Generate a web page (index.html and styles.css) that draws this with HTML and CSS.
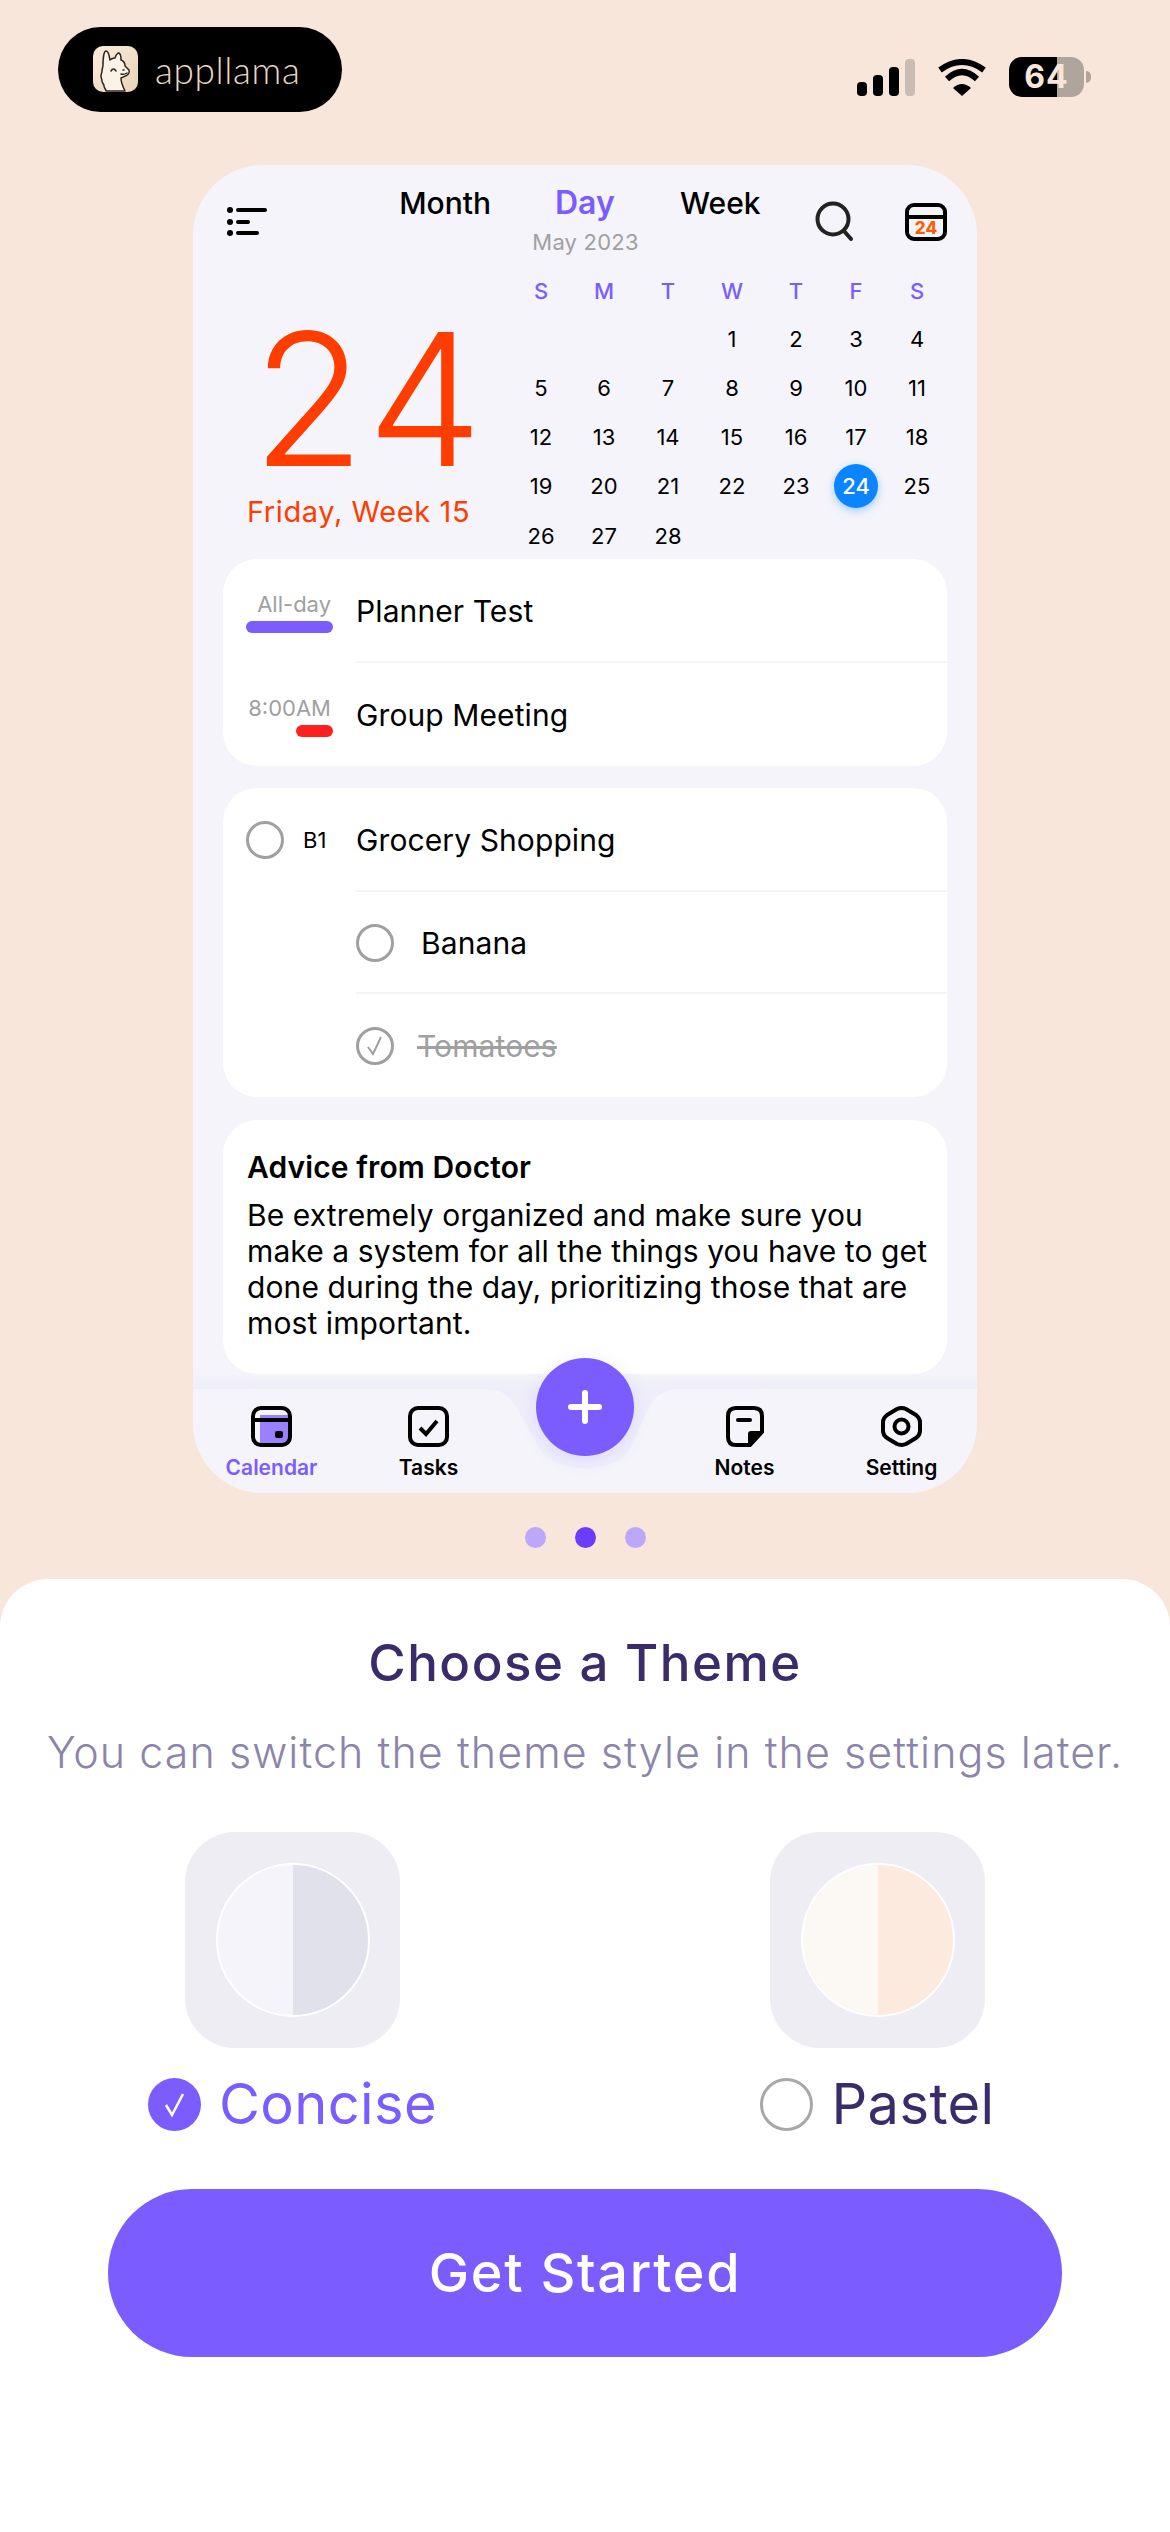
FILE: index.html
```html
<!DOCTYPE html>
<html lang="en">

<head>
    <meta charset="UTF-8">
    <meta name="viewport" content="width=device-width, initial-scale=1.0">
    <title>Choose a Theme</title>
    <link rel="stylesheet" href="styles.css">
</head>

<body>

    <!-- Top bar -->
    <div class="topbar">
        <div class="brand">
            <svg class="brand-icon" viewBox="0 0 45 46">
                <defs>
                    <linearGradient id="tileFill" x1="0" y1="0" x2="1" y2="1">
                        <stop offset="0" stop-color="#fbeedd" />
                        <stop offset="1" stop-color="#e9d2b8" />
                    </linearGradient>
                </defs>
                <rect width="45" height="46" rx="10" fill="url(#tileFill)" />
                <path d="M10 19 C10 12 11 5 13 5 C16 5 16 10 17 14 C18 13 20 12 22 12 C23 9 25 7 26 7 C28 8 28 11 28 14 C31 15 32 18 32 20 L36 24 C37 27 36 29 28 32 C28 37 30 41 32 45 H13 C13 43 11 42 11 40 C11 38 9 37 9 35 C9 33 8 32 8 30 C8 28 9 27 9 25 C9 23 10 21 10 19 Z" fill="#fbf3e8" stroke="#2c2620" stroke-width="1.5" stroke-linejoin="round" />
                <path d="M18 25 Q20.5 21 23 25 M30 24 L31 24 M28 28 Q31 29 34 27" fill="none" stroke="#2c2620" stroke-width="1.5" stroke-linecap="round" />
            </svg>
            <span class="brand-name">appllama</span>
        </div>
        <div class="status">
            <svg class="signal" viewBox="0 0 58 37">
                <rect x="0" y="23" width="10" height="14" rx="4" fill="#000" />
                <rect x="16" y="16" width="10" height="21" rx="4" fill="#000" />
                <rect x="32" y="8" width="10" height="29" rx="4" fill="#000" />
                <rect x="48" y="0" width="10" height="37" rx="4" fill="#c9bdb3" />
            </svg>
            <svg class="wifi" viewBox="0 0 50 37">
                <path d="M3 11 Q25 -5 47 11 M10 20 Q25 6 40 20" fill="none" stroke="#000" stroke-width="6" />
                <path d="M25 37 L16 29 Q25 21 34 29 Z" fill="#000" />
            </svg>
            <div class="battery">64</div>
        </div>
    </div>

    <!-- Phone preview -->
    <div class="phone">
        <div class="phone-head">
            <svg class="menu-icon" viewBox="0 0 40 30">
                <circle cx="3" cy="3" r="3" fill="#000" />
                <circle cx="3" cy="15" r="3" fill="#000" />
                <circle cx="3" cy="26" r="3" fill="#000" />
                <path d="M11 3 H38 M11 15 H21 M11 26 H30" stroke="#000" stroke-width="4" stroke-linecap="round" />
            </svg>
            <div class="tabs">
                <span class="tab tab-left">Month</span>
                <span class="tab tab-active">Day</span>
                <span class="tab">Week</span>
                <span class="tab-sub">May 2023</span>
            </div>
            <svg class="search-icon" viewBox="0 0 40 42">
                <circle cx="18" cy="18" r="15.5" fill="none" stroke="#222" stroke-width="4" />
                <path d="M29 30 L36 38" stroke="#222" stroke-width="4" stroke-linecap="round" />
            </svg>
            <div class="today-icon">24</div>
        </div>

        <div class="phone-date">
            <div class="big-date">
                <div class="big-num">24</div>
                <div class="big-label">Friday, Week 15</div>
            </div>
            <div class="month-grid">
                <span class="wd">S</span><span class="wd">M</span><span class="wd">T</span><span class="wd">W</span><span class="wd">T</span><span class="wd">F</span><span class="wd">S</span>
                <span></span><span></span><span></span><span>1</span><span>2</span><span>3</span><span>4</span>
                <span>5</span><span>6</span><span>7</span><span>8</span><span>9</span><span>10</span><span>11</span>
                <span>12</span><span>13</span><span>14</span><span>15</span><span>16</span><span>17</span><span>18</span>
                <span>19</span><span>20</span><span>21</span><span>22</span><span>23</span><span class="today">24</span><span>25</span>
                <span>26</span><span>27</span><span>28</span>
            </div>
        </div>

        <div class="lists">
            <div class="panel">
                <div class="row">
                    <div class="meta">
                        <span class="meta-text">All-day</span>
                        <span class="bar bar-purple"></span>
                    </div>
                    <div class="row-title line">Planner Test</div>
                </div>
                <div class="row">
                    <div class="meta">
                        <span class="meta-text">8:00AM</span>
                        <span class="bar bar-red"></span>
                    </div>
                    <div class="row-title row-end">Group Meeting</div>
                </div>
            </div>

            <div class="panel">
                <div class="row row-task">
                    <div class="meta-task">
                        <span class="radio"></span>
                        <span class="task-tag">B1</span>
                    </div>
                    <div class="row-title line">Grocery Shopping</div>
                </div>
                <div class="row row-sub row-short">
                    <div class="row-title line sub-title">
                        <span class="radio"></span>
                        <span class="sub-open">Banana</span>
                    </div>
                </div>
                <div class="row row-sub row-last">
                    <div class="row-title sub-title">
                        <span class="radio radio-done">
                            <svg viewBox="0 0 38 38">
                                <path d="M12 20 L17 27 L25 10" fill="none" stroke="#a0a0a0" stroke-width="2" />
                            </svg>
                        </span>
                        <span class="sub-done">Tomatoes</span>
                    </div>
                </div>
            </div>

            <div class="panel note">
                <div class="note-title">Advice from Doctor</div>
                <p class="note-text">Be extremely organized and make sure you make a system for all the things you have to get done during the day, prioritizing those that are most important.</p>
            </div>
        </div>

        <div class="nav">
            <svg class="nav-bg" viewBox="0 0 784 119">
                <defs>
                    <linearGradient id="navShade" x1="0" y1="0" x2="0" y2="1">
                        <stop offset="0" stop-color="#f4f4fa" />
                        <stop offset="0.14" stop-color="#eeedf9" />
                        <stop offset="1" stop-color="#f1f0fb" />
                    </linearGradient>
                </defs>
                <rect width="784" height="110" fill="url(#navShade)" />
                <path d="M0 15 H292 C310 15 316 22 324 34 L345 72 C355 90 375 94 392 94 C410 94 430 90 438 72 L456 34 C462 22 470 15 488 15 H784 V119 H0 Z" fill="#f4f4fa" />
            </svg>
            <div class="nav-item nav-active">
                <svg viewBox="0 0 41 41">
                    <path d="M9 9 H37 V33 Q37 38 32 38 H9 Z" fill="#9a80ff" />
                    <rect x="2" y="2" width="37" height="37" rx="8" fill="none" stroke="#000" stroke-width="4" />
                    <path d="M2 14 H39" stroke="#000" stroke-width="4" />
                    <rect x="24" y="25" width="8" height="7" rx="2" fill="#000" />
                </svg>
                <span>Calendar</span>
            </div>
            <div class="nav-item">
                <svg viewBox="0 0 41 41">
                    <rect x="2" y="2" width="37" height="37" rx="8" fill="none" stroke="#000" stroke-width="4" />
                    <path d="M12 22 L18 28 L29 15" fill="none" stroke="#000" stroke-width="4" />
                </svg>
                <span>Tasks</span>
            </div>
            <div class="nav-gap"></div>
            <div class="nav-item">
                <svg viewBox="0 0 38 41">
                    <path d="M10 2 H28 Q36 2 36 10 V26 L24 39 H10 Q2 39 2 31 V10 Q2 2 10 2 Z" fill="none" stroke="#000" stroke-width="4" />
                    <path d="M36 26 H25 Q23 26 23 28 V39 Z" fill="#000" stroke="#000" stroke-width="2" stroke-linejoin="round" />
                    <path d="M12 14 H24" stroke="#000" stroke-width="4" stroke-linecap="round" />
                </svg>
                <span>Notes</span>
            </div>
            <div class="nav-item">
                <svg viewBox="0 0 41 41">
                    <path d="M16 3 Q20.5 1 25 3 L35 9 Q39 12 39 16 V25 Q39 29 35 32 L25 38 Q20.5 40 16 38 L6 32 Q2 29 2 25 V16 Q2 12 6 9 Z" fill="none" stroke="#000" stroke-width="4" stroke-linejoin="round" />
                    <circle cx="20.5" cy="20.5" r="7" fill="none" stroke="#000" stroke-width="4" />
                </svg>
                <span>Setting</span>
            </div>
            <div class="fab">
                <svg viewBox="0 0 34 34">
                    <path d="M17 3 V31 M3 17 H31" stroke="#fff" stroke-width="6" stroke-linecap="round" />
                </svg>
            </div>
        </div>
    </div>

    <!-- Pager -->
    <div class="pager">
        <span class="pager-dot"></span>
        <span class="pager-dot pager-on"></span>
        <span class="pager-dot"></span>
    </div>

    <!-- Theme sheet -->
    <div class="sheet">
        <h1 class="sheet-title">Choose a Theme</h1>
        <p class="sheet-sub">You can switch the theme style in the settings later.</p>

        <div class="themes">
            <div class="theme">
                <div class="theme-tile">
                    <div class="swatch swatch-concise"></div>
                </div>
                <div class="theme-label label-on">
                    <span class="pick pick-on">
                        <svg viewBox="0 0 53 53">
                            <path d="M18 27 L24 37 L35 16" fill="none" stroke="#fff" stroke-width="2.5" />
                        </svg>
                    </span>
                    Concise
                </div>
            </div>
            <div class="theme">
                <div class="theme-tile">
                    <div class="swatch swatch-pastel"></div>
                </div>
                <div class="theme-label">
                    <span class="pick"></span>
                    Pastel
                </div>
            </div>
        </div>

        <div class="start-btn">Get Started</div>
    </div>

</body>

</html>
```

FILE: styles.css
```css
* {
    box-sizing: border-box;
}

body {
    margin: 0;
    width: 1170px;
    height: 2532px;
    overflow: hidden;
    background-color: #f8e6db;
    font-family: "Inter", "Liberation Sans", sans-serif;
    color: #000;
}

/* top bar */
.topbar {
    height: 112px;
    padding: 27px 86px 0 58px;
    display: flex;
    justify-content: space-between;
    align-items: flex-start;
}

.brand {
    width: 284px;
    height: 85px;
    padding: 19px 0 0 35px;
    display: flex;
    gap: 17px;
    background-color: #000;
    border-radius: 43px;
}

.brand-icon {
    width: 45px;
    height: 46px;
}

.brand-name {
    margin-top: 2px;
    font-family: "Lato", sans-serif;
    font-weight: 300;
    font-size: 37px;
    line-height: 44px;
    letter-spacing: 0.6px;
    color: #e8d6c3;
}

.status {
    margin-top: 30px;
    height: 40px;
    display: flex;
    align-items: center;
    gap: 22px;
}

.signal {
    width: 58px;
    height: 37px;
}

.wifi {
    width: 50px;
    height: 37px;
}

.battery {
    position: relative;
    width: 75px;
    height: 40px;
    background: linear-gradient(90deg, #000 48px, #b0a59c 48px);
    border-radius: 13px;
    color: #f8e6db;
    font-weight: 700;
    font-size: 32px;
    line-height: 40px;
    text-align: center;
    letter-spacing: 1px;
}

.battery::after {
    content: "";
    position: absolute;
    right: -7px;
    top: 14px;
    width: 5px;
    height: 12px;
    background-color: #b0a59c;
    border-radius: 0 6px 6px 0;
}

/* phone preview */
.phone {
    width: 784px;
    height: 1328px;
    margin: 53px auto 0;
    background-color: #f4f4fa;
    border-radius: 70px;
    overflow: hidden;
}

.phone-head {
    height: 110px;
    padding-left: 34px;
    display: flex;
    align-items: flex-start;
}

.menu-icon {
    width: 40px;
    height: 30px;
    margin-top: 42px;
}

.tabs {
    margin: 21px 0 0 132px;
    display: grid;
    grid-template-columns: 92px 61px 92px;
    column-gap: 64px;
    align-items: baseline;
}

.tab {
    font-size: 30px;
    font-weight: 500;
    line-height: 34px;
}

.tab-left {
    text-align: right;
}

.tab-active {
    font-size: 32px;
    font-weight: 600;
    white-space: nowrap;
    color: #7b5cff;
}

.tab-sub {
    grid-column: 1 / 4;
    margin-top: 9px;
    text-align: center;
    font-size: 22px;
    line-height: 26px;
    letter-spacing: 0.2px;
    color: #a0a0a0;
}

.search-icon {
    width: 40px;
    height: 42px;
    margin: 36px 0 0 43px;
}

.today-icon {
    width: 42px;
    height: 38px;
    margin: 38px 0 0 50px;
    padding-top: 12px;
    border: 4px solid #000;
    border-radius: 9px;
    background: linear-gradient(#000, #000) 0 8px / 100% 4px no-repeat;
    color: #ff5c00;
    font-size: 17px;
    font-weight: 800;
    line-height: 18px;
    text-align: center;
}

.phone-date {
    height: 284px;
    display: flex;
}

.big-date {
    width: 317px;
    padding: 32px 0 0 54px;
}

.big-num {
    font-size: 184px;
    font-weight: 300;
    line-height: 184px;
    letter-spacing: 5px;
    margin-left: 5px;
    white-space: nowrap;
    color: #ff3d00;
}

.big-label {
    margin-top: 4px;
    font-size: 29px;
    line-height: 34px;
    letter-spacing: 0.6px;
    white-space: nowrap;
    color: #ff3d00;
}

.month-grid {
    display: grid;
    grid-template-columns: 62px 64px 64px 64px 64px 56px 66px;
    grid-template-rows: 39px repeat(5, 49.25px);
    justify-items: center;
    align-items: center;
    font-size: 22px;
}

.wd {
    align-self: start;
    line-height: 32px;
    font-weight: 500;
    color: #7b5cff;
}

.today {
    width: 44px;
    height: 44px;
    border-radius: 50%;
    background-color: #0a84ff;
    box-shadow: 0 3px 8px rgba(10, 132, 255, 0.35);
    color: #fff;
    line-height: 44px;
    text-align: center;
    font-weight: 500;
}

/* lists */
.lists {
    height: 815px;
    padding: 0 30px;
    display: flex;
    flex-direction: column;
    gap: 22px;
}

.panel {
    background-color: #fff;
    border-radius: 34px;
}

.row {
    height: 103.5px;
    display: flex;
}

.row-task {
    height: 104px;
}

.row-short {
    height: 102px;
}

.row-last {
    height: 103px;
}

.meta {
    width: 133px;
    padding: 34px 23px 0 0;
    display: flex;
    flex-direction: column;
    align-items: flex-end;
    gap: 6px;
}

.meta-text {
    padding-right: 2px;
    font-size: 22px;
    line-height: 22px;
    color: #a0a0a0;
}

.bar {
    height: 12px;
    border-radius: 6px;
}

.bar-purple {
    width: 87px;
    background-color: #7b5cff;
}

.bar-red {
    width: 37px;
    background-color: #ff1f1f;
}

.meta-task {
    width: 133px;
    padding-left: 23px;
    display: flex;
    align-items: center;
    gap: 19px;
}

.task-tag {
    font-size: 22px;
}

.radio {
    width: 38px;
    height: 38px;
    flex-shrink: 0;
    border: 3px solid #a0a0a0;
    border-radius: 50%;
    position: relative;
}

.radio-done svg {
    position: absolute;
    left: -3px;
    top: -3px;
    width: 38px;
    height: 38px;
}

.row-title {
    flex: 1;
    display: flex;
    align-items: center;
    font-size: 30px;
    letter-spacing: 0.1px;
}

.row-end {
    padding-top: 2px;
}

.line {
    padding-top: 2px;
    border-bottom: 2px solid #f4f4f6;
}

.row-sub {
    padding-left: 133px;
}

.sub-open {
    margin-left: 27px;
}

.sub-done {
    margin-left: 23px;
    color: #a0a0a0;
    text-decoration: line-through;
}

.note {
    height: 254px;
    margin-top: 1px;
    padding: 29px 18px 0 24px;
}

.note-title {
    font-size: 30px;
    font-weight: 600;
    line-height: 36px;
    letter-spacing: 0.1px;
}

.note-text {
    margin: 12px 0 0;
    font-size: 30px;
    line-height: 36px;
    letter-spacing: 0.1px;
}

/* bottom nav */
.nav {
    position: relative;
    height: 119px;
    padding-top: 32px;
    display: grid;
    grid-template-columns: 157px 157px 159px 157px 157px;
}

.nav-bg {
    position: absolute;
    left: 0;
    top: 0;
    width: 784px;
    height: 119px;
}

.nav-item {
    position: relative;
    display: flex;
    flex-direction: column;
    align-items: center;
    gap: 8px;
    font-size: 21px;
    font-weight: 600;
    line-height: 26px;
}

.nav-item svg {
    height: 41px;
}

.nav-active {
    color: #7b5cff;
}

.fab {
    position: absolute;
    left: 343px;
    top: -16px;
    width: 98px;
    height: 98px;
    padding: 32px;
    border-radius: 50%;
    background-color: #7b5cff;
    box-shadow: 0 4px 18px rgba(123, 92, 255, 0.14);
}

.fab svg {
    display: block;
    width: 34px;
    height: 34px;
}

/* pager */
.pager {
    margin-top: 34px;
    display: flex;
    justify-content: center;
    gap: 29px;
}

.pager-dot {
    width: 21px;
    height: 21px;
    border-radius: 50%;
    background-color: #bba8fa;
}

.pager-on {
    background-color: #6b3dfb;
}

/* theme sheet */
.sheet {
    height: 953px;
    margin-top: 31px;
    padding-top: 54px;
    background-color: #fff;
    border-radius: 48px 48px 0 0;
}

.sheet-title {
    margin: 0;
    text-align: center;
    font-size: 51px;
    font-weight: 500;
    line-height: 60px;
    letter-spacing: 1.5px;
    color: #3a2c6b;
}

.sheet-sub {
    margin: 34px 0 0;
    text-align: center;
    font-size: 43px;
    font-weight: 300;
    line-height: 50px;
    letter-spacing: 1.05px;
    white-space: nowrap;
    color: #8b84ab;
}

.themes {
    margin-top: 55px;
    display: grid;
    grid-template-columns: 1fr 1fr;
}

.theme {
    display: flex;
    flex-direction: column;
    align-items: center;
}

.theme-tile {
    width: 215px;
    height: 216px;
    display: flex;
    align-items: center;
    justify-content: center;
    background-color: #ededf3;
    border-radius: 50px;
}

.swatch {
    width: 154px;
    height: 154px;
    border: 2px solid #fff;
    border-radius: 50%;
}

.swatch-concise {
    background: linear-gradient(90deg, #f4f4fa 50%, #e0e1eb 50%);
}

.swatch-pastel {
    background: linear-gradient(90deg, #fcf8f4 50%, #fceadf 50%);
}

.theme-label {
    margin-top: 29px;
    display: flex;
    align-items: center;
    gap: 18px;
    font-size: 56px;
    line-height: 54px;
    letter-spacing: 0.4px;
    color: #3a2c6b;
}

.label-on {
    color: #7b5cff;
}

.pick {
    width: 53px;
    height: 53px;
    border: 3px solid #a8a8a8;
    border-radius: 50%;
}

.pick-on {
    border: none;
    background-color: #7b5cff;
}

.pick svg {
    display: block;
    width: 53px;
    height: 53px;
}

.start-btn {
    width: 954px;
    height: 168px;
    margin: 58px auto 0;
    background-color: #7b5cff;
    border-radius: 84px;
    color: #fff;
    font-size: 54px;
    font-weight: 500;
    line-height: 168px;
    text-align: center;
    letter-spacing: 1.7px;
}
```
